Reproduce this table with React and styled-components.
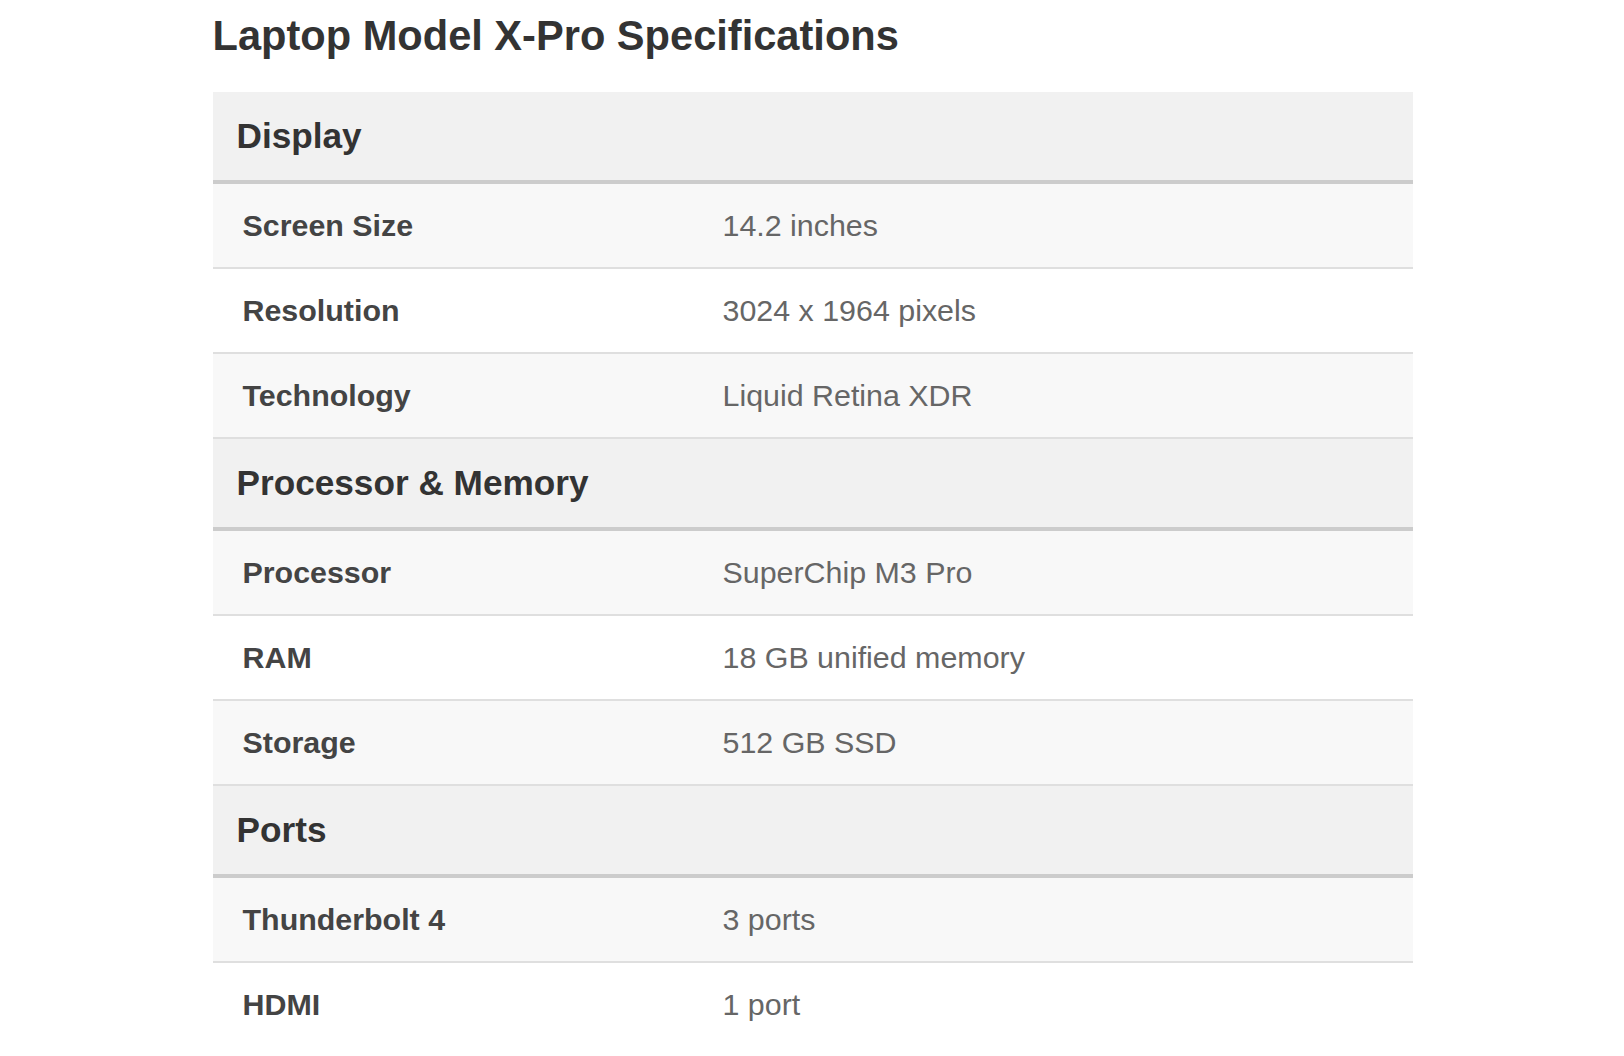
import React from "react";
import styled, { createGlobalStyle } from "styled-components";

const specs = [
  {
    title: "Display",
    rows: [
      ["Screen Size", "14.2 inches"],
      ["Resolution", "3024 x 1964 pixels"],
      ["Technology", "Liquid Retina XDR"],
    ],
  },
  {
    title: "Processor & Memory",
    rows: [
      ["Processor", "SuperChip M3 Pro"],
      ["RAM", "18 GB unified memory"],
      ["Storage", "512 GB SSD"],
    ],
  },
  {
    title: "Ports",
    rows: [
      ["Thunderbolt 4", "3 ports"],
      ["HDMI", "1 port"],
    ],
  },
];

export default function App() {
  return (
    <>
      <GlobalStyle />
      <Page>
        <Title>Laptop Model X-Pro Specifications</Title>
        <SpecTable>
          {specs.map((section, si) => (
            <Section key={section.title}>
              <SectionHeader>{section.title}</SectionHeader>
              {section.rows.map(([label, value], i) => (
                <Row
                  key={label}
                  $shaded={i % 2 === 0}
                  $last={si === specs.length - 1 && i === section.rows.length - 1}
                >
                  <Label>{label}</Label>
                  <Value>{value}</Value>
                </Row>
              ))}
            </Section>
          ))}
        </SpecTable>
      </Page>
    </>
  );
}

const GlobalStyle = createGlobalStyle`
  html, body {
    margin: 0;
    padding: 0;
    background: #fff;
  }

  body {
    font-family: "Liberation Sans", Arial, Helvetica, sans-serif;
  }
`;

const Page = styled.div`
  width: 1200px;
  margin: 0 auto;
  padding-left: 1px;
`;

const Title = styled.h1`
  margin: 12px 0 32px;
  font-size: 41.6px;
  line-height: 48px;
  font-weight: 700;
  color: #333;
`;

const SpecTable = styled.div`
  display: flex;
  flex-direction: column;
`;

const Section = styled.div`
  display: flex;
  flex-direction: column;
`;

const SectionHeader = styled.div`
  height: 88px;
  display: flex;
  align-items: center;
  padding-left: 24px;
  background: #f1f1f1;
  border-bottom: 4px solid #ccc;
  font-size: 35.2px;
  font-weight: 700;
  color: #333;
`;

const Row = styled.div`
  display: grid;
  grid-template-columns: 40% 60%;
  height: 83px;
  align-items: center;
  background: ${(p) => (p.$shaded ? "#f8f8f8" : "#fff")};
  border-bottom: 2px solid ${(p) => (p.$last ? "transparent" : "#dfdfdf")};
  font-size: 30.4px;
`;

const Label = styled.div`
  padding-left: 30px;
  font-weight: 700;
  color: #444;
`;

const Value = styled.div`
  padding-left: 30px;
  color: #666;
`;
